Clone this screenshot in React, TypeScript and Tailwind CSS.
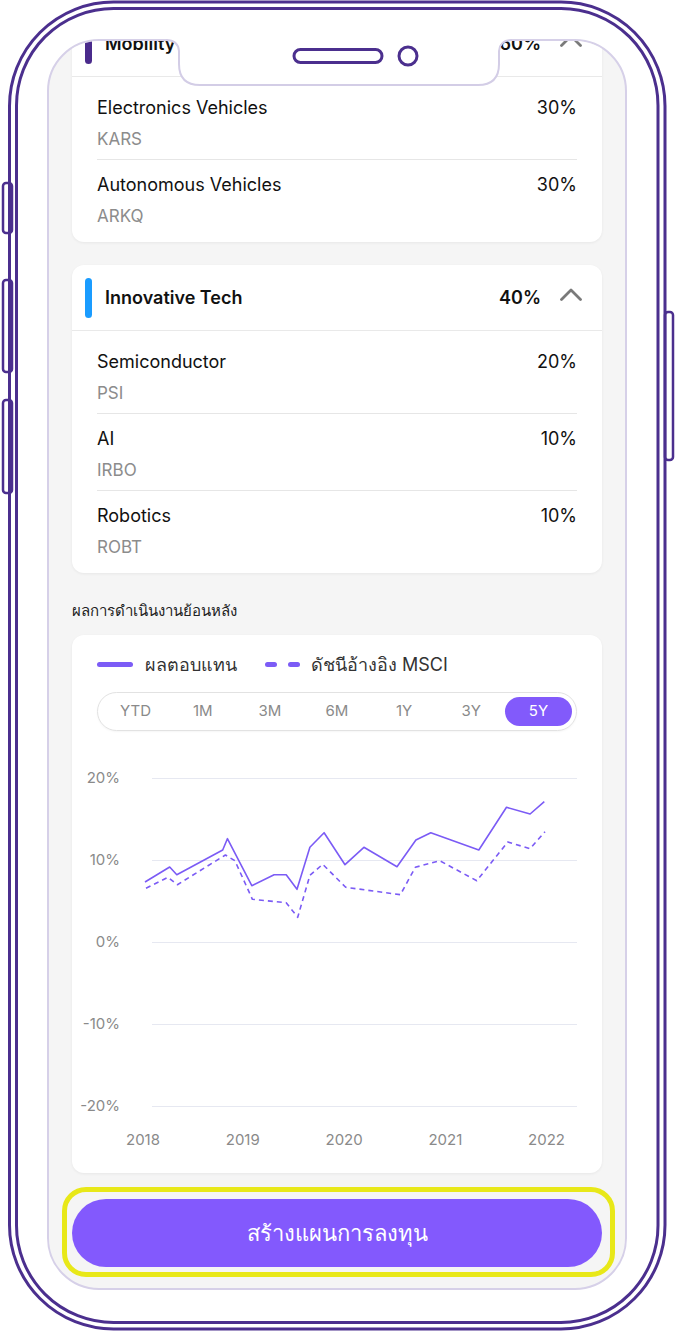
type Holding = { name: string; ticker: string; pct: string }

const mobility: Holding[] = [
  { name: 'Electronics Vehicles', ticker: 'KARS', pct: '30%' },
  { name: 'Autonomous Vehicles', ticker: 'ARKQ', pct: '30%' },
]

const innovative: Holding[] = [
  { name: 'Semiconductor', ticker: 'PSI', pct: '20%' },
  { name: 'AI', ticker: 'IRBO', pct: '10%' },
  { name: 'Robotics', ticker: 'ROBT', pct: '10%' },
]

const periods = ['YTD', '1M', '3M', '6M', '1Y', '3Y', '5Y']
const yLabels = ['20%', '10%', '0%', '-10%', '-20%']
const years = ['2018', '2019', '2020', '2021', '2022']

// chart points, in px of the plot box (530 x 348)
const returns =
  '73,114 97.7,99 104.8,106.7 150.7,82 155.4,70.7 179.8,117.7 202.1,106.7 214.2,106.7 225,121.3 237.9,79.3 252.1,64.7 273,96.7 291.9,79.3 325,98.7 343.9,72 358.8,64.7 406.8,82 434.5,39.3 458.1,46 472.3,33.7'
const benchmark =
  '74,120.3 96,109.3 105.4,116.7 153.4,87 162.9,92.7 180.4,131.3 214.2,134.7 225.7,149.3 237.9,107.3 250.7,96.3 273.7,119.3 328.4,126.7 343.3,99.3 367.6,92.7 404.8,112.7 435.8,74 458.1,80.7 473,63.7'

const Chevron = () => (
  <svg className="mb-[6px] ml-[19px]" width="22" height="13" viewBox="0 0 22 13">
    <polyline points="1.5,11.5 11,2 20.5,11.5" fill="none" stroke="#7a7a7a" strokeWidth="2.8" strokeLinecap="round" strokeLinejoin="round" />
  </svg>
)

const GroupCard = ({
  title,
  pct,
  barColor,
  items,
}: {
  title: string
  pct: string
  barColor: string
  items: Holding[]
}) => {
  return (
    <div className="w-[530px] rounded-[12px] bg-white shadow-[0_1px_3px_rgba(0,0,0,0.06)]">
      <div className="flex h-[66px] items-center border-b border-[#e9e9e9] pl-[13px] pr-[20px]">
        <div className={`h-[40px] w-[7px] rounded-full ${barColor}`} />
        <span className="ml-[13px] text-[18px] font-semibold text-[#111]">{title}</span>
        <span className="ml-auto text-[18px] font-semibold text-[#111]">{pct}</span>
        <Chevron />
      </div>
      <div className="mx-[25px] divide-y divide-[#e6e6e6] py-[6px]">
        {items.map((item) => (
          <div key={item.ticker} className="flex flex-col gap-[9px] pb-[7px] pt-[12px]">
            <div className="flex h-[24px] items-center justify-between text-[18px] text-[#111]">
              <span>{item.name}</span>
              <span>{item.pct}</span>
            </div>
            <div className="flex h-[24px] items-center text-[17px] text-[#8c8c8c]">{item.ticker}</div>
          </div>
        ))}
      </div>
    </div>
  )
}

const PhoneFrame = () => {
  const ink = '#4b2f8e'
  return (
    <svg className="pointer-events-none absolute inset-0" width="677" height="1334" viewBox="0 0 677 1334">
      {/* side buttons */}
      <rect x="3" y="183" width="9" height="50" rx="3" fill="white" stroke={ink} strokeWidth="2.5" />
      <rect x="3" y="280" width="9" height="92" rx="3" fill="white" stroke={ink} strokeWidth="2.5" />
      <rect x="3" y="400" width="9" height="93" rx="3" fill="white" stroke={ink} strokeWidth="2.5" />
      <rect x="665" y="312" width="8" height="148" rx="3" fill="white" stroke={ink} strokeWidth="2.5" />
      {/* body, double line */}
      <rect x="9.5" y="2" width="655.5" height="1327" rx="104" fill="none" stroke={ink} strokeWidth="3" />
      <rect x="16.5" y="8.5" width="641.5" height="1314" rx="97" fill="none" stroke={ink} strokeWidth="3" />
      {/* notch */}
      <path
        d="M160 24 L168 40 Q178 40 179 50 L179 64 Q179 85 200 85 L478 85 Q499 85 499 64 L499 50 Q500 40 510 40 L518 24 Z"
        fill="white"
      />
      <path
        d="M166 40 Q178 40 179 51 L179 64 Q179 85 200 85 L478 85 Q499 85 499 64 L499 51 Q500 40 512 40"
        fill="none"
        stroke="#d3cde6"
        strokeWidth="2"
      />
      <rect x="294" y="49.5" width="88" height="13" rx="6.5" fill="white" stroke={ink} strokeWidth="3" />
      <circle cx="408" cy="56" r="9" fill="white" stroke={ink} strokeWidth="3" />
    </svg>
  )
}

export default function App() {
  return (
    <div
      className="relative h-[1334px] w-[677px] overflow-hidden bg-white pl-[47px] pt-[39px]"
      style={{ fontFamily: 'Inter, "Noto Sans", "Liberation Sans", sans-serif' }}
    >
      <div className="h-[1251px] w-[580px] overflow-hidden rounded-[52px] border-2 border-[#d6d0e8] bg-[#f5f5f5]">
        <div className="-mt-[30px] flex flex-col px-[23px]">
          <GroupCard title="Mobility" pct="60%" barColor="bg-[#4a2b8c]" items={mobility} />
          <div className="mt-[23px]">
            <GroupCard title="Innovative Tech" pct="40%" barColor="bg-[#1a9cff]" items={innovative} />
          </div>

          <h2 className="mt-[28px] h-[20px] text-[15px] leading-[20px] text-[#222]">ผลการดำเนินงานย้อนหลัง</h2>

          <div className="mt-[14px] w-[530px] rounded-[12px] bg-white pb-[23px] pt-[18px] shadow-[0_1px_3px_rgba(0,0,0,0.06)]">
            <div className="flex h-[22px] items-center px-[25px] text-[18px] text-[#333]">
              <div className="h-[5px] w-[36px] rounded-full bg-[#7c5cf6]" />
              <span className="ml-[12px]">ผลตอบแทน</span>
              <div className="ml-[28px] flex gap-[11px]">
                <div className="h-[5px] w-[12px] rounded-full bg-[#7c5cf6]" />
                <div className="h-[5px] w-[12px] rounded-full bg-[#7c5cf6]" />
              </div>
              <span className="ml-[11px]">ดัชนีอ้างอิง MSCI</span>
            </div>

            <div className="mx-[25px] mt-[17px] grid h-[39px] grid-cols-7 rounded-full border border-[#e2e2e2] p-[4px] shadow-[0_1px_2px_rgba(0,0,0,0.04)]">
              {periods.map((p) => (
                <div
                  key={p}
                  className={`flex items-center justify-center rounded-full text-[15px] ${
                    p === '5Y' ? 'bg-[#825afb] text-white' : 'text-[#8a8a8a]'
                  }`}
                >
                  {p}
                </div>
              ))}
            </div>

            <div className="relative mt-[37px] flex flex-col gap-[62px]">
              {yLabels.map((l) => (
                <div key={l} className="flex h-[20px] items-center pr-[25px]">
                  <span className="w-[48px] text-right text-[15px] text-[#8a8a8a]">{l}</span>
                  <div className="ml-[32px] h-px flex-1 bg-[#e6e8f1]" />
                </div>
              ))}
              <svg className="absolute inset-0" width="530" height="348" viewBox="0 0 530 348">
                <polyline points={returns} fill="none" stroke="#7b5bf5" strokeWidth="1.6" strokeLinejoin="round" />
                <polyline
                  points={benchmark}
                  fill="none"
                  stroke="#7b5bf5"
                  strokeWidth="1.6"
                  strokeDasharray="5 4"
                  strokeLinejoin="round"
                />
              </svg>
            </div>

            <div className="ml-[54px] mr-[37px] mt-[14px] flex h-[20px] items-center justify-between text-[15px] text-[#8a8a8a]">
              {years.map((y) => (
                <span key={y}>{y}</span>
              ))}
            </div>
          </div>

          <div className="-ml-[10px] -mr-[13px] mt-[14px] rounded-[24px] border-[5px] border-[#e8e818] pb-[5px] pl-[5px] pr-[8px] pt-[7px]">
            <button className="flex h-[68px] w-[530px] items-center justify-center rounded-full bg-[#8359fd] text-[22px] font-medium text-white">
              สร้างแผนการลงทุน
            </button>
          </div>
        </div>
      </div>
      <PhoneFrame />
    </div>
  )
}
